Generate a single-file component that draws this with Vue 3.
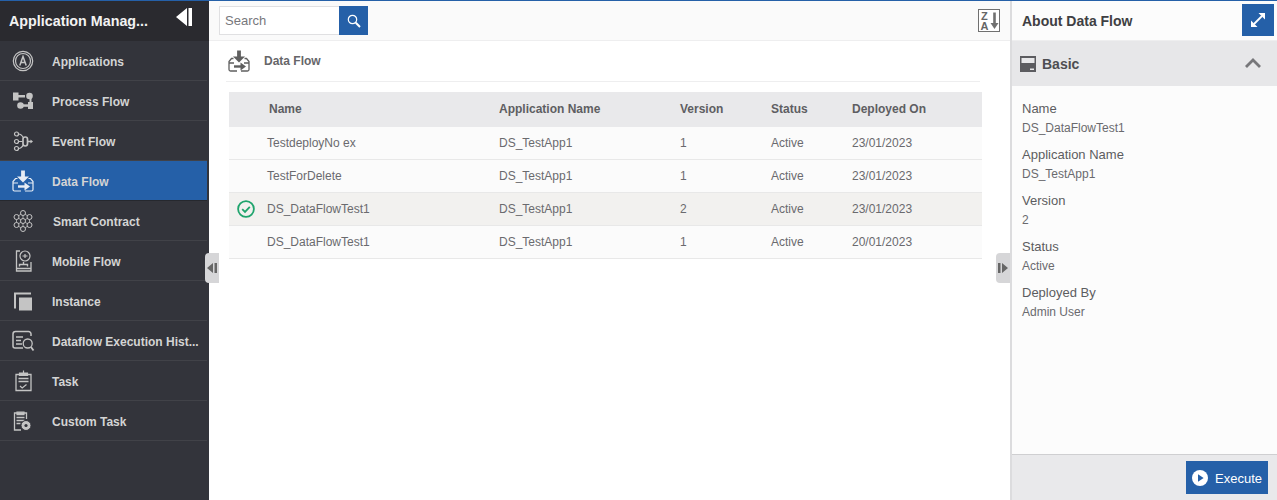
<template>
  <div class="app">
    <aside class="sidebar">
      <div class="side-head">
        <span class="side-title">Application Manag...</span>
        <svg class="collapse" width="16" height="18" viewBox="0 0 16 18"><path d="M11 0v18L0 9z M12.500 0H16V18H12.500z" fill="#fff"/></svg>
      </div>
      <div v-for="item in menu" :key="item.name" class="menu-item" :class="{ active: item.active }">
        <span class="menu-icon">
          <svg width="26" height="26" viewBox="0 0 26 26" fill="none" stroke="#c4c4c4" stroke-width="1.200" v-html="item.icon"></svg>
        </span>
        <span class="menu-label" :style="{ marginLeft: item.shift + 'px' }">{{ item.name }}</span>
      </div>
    </aside>

    <main class="main">
      <div class="toolbar">
        <div class="search">
          <input class="search-input" placeholder="Search" />
          <button class="search-btn">
            <svg width="14" height="14" viewBox="0 0 14 14" fill="none" stroke="#fff"><circle cx="5.500" cy="5.500" r="4.200" stroke-width="1.200"/><path d="M8.800 8.800L13 13" stroke-width="2"/></svg>
          </button>
        </div>
        <svg class="sort" width="22" height="23" viewBox="0 0 22 23">
          <rect x="0.500" y="0.500" width="21" height="22" fill="#fff" stroke="#707070"/>
          <text x="3" y="10.500" class="sort-text">Z</text>
          <text x="2.500" y="20.500" class="sort-text">A</text>
          <path d="M16.500 3.500v13" stroke="#707070" stroke-width="2.600"/><path d="M12.500 14h8l-4 6z" fill="#707070"/>
        </svg>
      </div>
      <div class="content">
        <div class="crumb">
          <svg width="26" height="26" viewBox="0 0 26 26" fill="none" stroke="#5f5f5f" stroke-width="1.300" v-html="dataFlowIcon('#5f5f5f')"></svg>
          <span class="crumb-label">Data Flow</span>
        </div>
        <table class="grid">
          <thead>
            <tr>
              <th class="c-name">Name</th>
              <th class="c-app">Application Name</th>
              <th class="c-ver">Version</th>
              <th class="c-stat">Status</th>
              <th>Deployed On</th>
            </tr>
          </thead>
          <tbody>
            <tr v-for="row in rows" :key="row.name + row.version" :class="{ selected: row.selected }">
              <td class="c-name">
                <svg v-if="row.selected" class="tick" width="18" height="18" viewBox="0 0 18 18" fill="none" stroke="#1fa46d"><circle cx="9" cy="9" r="7.900" stroke-width="1.800"/><path d="M5.200 9.200l2.800 2.700 4.800-5" stroke-width="1.800"/></svg>
                {{ row.name }}
              </td>
              <td>{{ row.app }}</td>
              <td>{{ row.version }}</td>
              <td>{{ row.status }}</td>
              <td>{{ row.date }}</td>
            </tr>
          </tbody>
        </table>
      </div>
      <div class="handle handle-left">
        <svg width="10" height="10" viewBox="0 0 10 10"><path d="M6 0v10L0 5z M7.500 0H10V10H7.500z" fill="#666"/></svg>
      </div>
      <div class="handle handle-right">
        <svg width="10" height="10" viewBox="0 0 10 10"><path d="M0 0H2.500V10H0z M4 0l6 5-6 5z" fill="#666"/></svg>
      </div>
    </main>

    <aside class="detail">
      <div class="detail-head">
        <span class="detail-title">About Data Flow</span>
        <button class="expand">
          <svg width="14" height="14" viewBox="0 0 14 14"><path d="M7.500 0H14V6.500zM0 7.500V14H6.500z" fill="#fff"/><path d="M3 11L11 3" stroke="#fff" stroke-width="1.800"/></svg>
        </button>
      </div>
      <div class="section-head">
        <svg width="16" height="16" viewBox="0 0 16 16"><rect width="16" height="16" fill="#5c5c60"/><rect x="1.500" y="2" width="13" height="5" fill="#e8e8ea"/><rect x="10" y="12.500" width="4" height="1.500" fill="#e8e8ea"/></svg>
        <span class="section-title">Basic</span>
        <svg class="chev" width="16" height="10" viewBox="0 0 16 10" fill="none" stroke="#77777a" stroke-width="2.800"><path d="M1 9l7-7 7 7"/></svg>
      </div>
      <div class="fields">
        <div v-for="f in fields" :key="f.label" class="field">
          <div class="field-label">{{ f.label }}</div>
          <div class="field-value">{{ f.value }}</div>
        </div>
      </div>
      <div class="detail-foot">
        <button class="execute">
          <svg width="16" height="16" viewBox="0 0 16 16"><circle cx="8" cy="8" r="8" fill="#fff"/><path d="M6 4.200v7.600l5.600-3.800z" fill="#2560a8"/></svg>
          <span class="execute-label">Execute</span>
        </button>
      </div>
    </aside>
  </div>
</template>

<script setup>
// buckets and the two arrows, shared by the menu entry and the page heading
function dataFlowIcon(color) {
  return `<path d="M13 2.500v7" stroke="${color}" stroke-width="3.800"/>
    <path d="M7 8.500h12L13 14.500z" fill="${color}" stroke="none"/>
    <path d="M7.500 10.500H5.500L3 13.500V21.500a1.500 1.500 0 0 0 1.500 1.500H11M18.500 10.500h2L23 13.500V21.500a1.500 1.500 0 0 1-1.500 1.500H15M3 15h5M18 15h5"/>
    <path d="M8 18.500h7.500" stroke="${color}" stroke-width="2.400"/>
    <path d="M14.500 14.500l5.500 4-5.500 4z" fill="${color}" stroke="none"/>`
}

const menu = [
  { name: 'Applications', shift: 0, icon: '<circle cx="13" cy="13" r="9.700"/><circle cx="13" cy="13" r="7.500"/><path d="M9.800 17.500l3.200-9 3.200 9M11 14.500h4" stroke-width="1.500"/>' },
  { name: 'Process Flow', shift: 0, icon: '<g fill="#c4c4c4" stroke="none"><rect x="3" y="4.500" width="5.500" height="8"/><rect x="8" y="7" width="7" height="2.500"/><circle cx="19.500" cy="8" r="3.300"/><circle cx="10.500" cy="17.500" r="3.300"/><rect x="18" y="14" width="5" height="7"/><rect x="13" y="16.300" width="6" height="2.500"/><rect x="19.500" y="10" width="2" height="5"/></g>' },
  { name: 'Event Flow', shift: 0, icon: '<circle cx="6.500" cy="6" r="2"/><circle cx="6.500" cy="13.500" r="2"/><circle cx="6.500" cy="20.500" r="2"/><path d="M8.500 6c2 0 4 2 5 4M8.500 13.500h4M8.500 20.500c2 0 4-2 5-4"/><rect x="13" y="9" width="4.500" height="9" rx="2.200" stroke-width="1.700"/><path d="M18 13.500h3" stroke-width="1.500"/><path d="M20.500 11.500l2.500 2-2.500 2z" fill="#c4c4c4" stroke="none"/>' },
  { name: 'Data Flow', shift: 0, active: true, icon: '<g stroke="#e8edf5">' + dataFlowIcon('#e8edf5') + '</g>' },
  { name: 'Smart Contract', shift: 1, icon: '<g stroke-width="1"><path d="M13 5v16M6.500 9l13 8M19.500 9l-13 8M13 5l6.500 4v8L13 21l-6.500-4V9z" stroke-width="0.800"/><circle cx="13" cy="5" r="2.500" fill="#33343b"/><circle cx="6.500" cy="9" r="2.500" fill="#33343b"/><circle cx="19.500" cy="9" r="2.500" fill="#33343b"/><circle cx="13" cy="13" r="2.500" fill="#33343b"/><circle cx="6.500" cy="17" r="2.500" fill="#33343b"/><circle cx="19.500" cy="17" r="2.500" fill="#33343b"/><circle cx="13" cy="21" r="2.500" fill="#33343b"/></g>' },
  { name: 'Mobile Flow', shift: 0, icon: '<path d="M10 3H6.500v20H21V14M6.500 20.500H21" stroke-width="1.300"/><circle cx="15" cy="8" r="5"/><path d="M12.500 8h5M15 6v4"/><path d="M9.500 18.500v-2h8v2M13.500 14v3" stroke-width="1.400"/>' },
  { name: 'Instance', shift: 0, icon: '<path d="M4 20.500V4.500h17v2H6v14z" fill="#c4c4c4" stroke="none"/><rect x="9" y="9.500" width="13" height="13" fill="#c4c4c4" stroke="none"/>' },
  { name: 'Dataflow Execution Hist...', shift: 0, icon: '<path d="M21 8V6a2.500 2.500 0 0 0-2.500-2.500H5.500A2.500 2.500 0 0 0 3 6v12a2 2 0 0 0 2 2h8" stroke-width="1.500"/><path d="M6 9h7M6 12.500h5M6 16h6" stroke-width="1.300"/><circle cx="17.700" cy="15.500" r="4.500" stroke-width="1.300"/><path d="M21 19l2.500 3.500" stroke-width="1.800"/>' },
  { name: 'Task', shift: 0, icon: '<path d="M9.500 6.500H6v16h15v-16h-3.500" stroke-width="1.300"/><path d="M9.500 5h8v2.500h-8zM13.500 2.500V5" fill="#c4c4c4"/><path d="M8.500 10.500h10M8.500 13.500h10" stroke-width="1.300"/><path d="M10 18l2.200 2 4.300-3.500"/>' },
  { name: 'Custom Task', shift: 0, icon: '<path d="M7 5H4.500v17H11M14 5h2.500v6" stroke-width="1.300"/><path d="M7 4.200h7v2.500H7z" fill="#c4c4c4"/><path d="M6.500 9.500h8M6.500 12.500h8M6.500 15.500h4" stroke-width="1.300"/><circle cx="16" cy="17.500" r="5" fill="#c4c4c4" stroke="#33343b" stroke-width="1"/><circle cx="16" cy="17.500" r="1.600" fill="#33343b" stroke="none"/>' }
]

const rows = [
  { name: 'TestdeployNo ex', app: 'DS_TestApp1', version: 1, status: 'Active', date: '23/01/2023' },
  { name: 'TestForDelete', app: 'DS_TestApp1', version: 1, status: 'Active', date: '23/01/2023' },
  { name: 'DS_DataFlowTest1', app: 'DS_TestApp1', version: 2, status: 'Active', date: '23/01/2023', selected: true },
  { name: 'DS_DataFlowTest1', app: 'DS_TestApp1', version: 1, status: 'Active', date: '20/01/2023' }
]

const fields = [
  { label: 'Name', value: 'DS_DataFlowTest1' },
  { label: 'Application Name', value: 'DS_TestApp1' },
  { label: 'Version', value: '2' },
  { label: 'Status', value: 'Active' },
  { label: 'Deployed By', value: 'Admin User' }
]
</script>

<style scoped>
.app {
  display: flex;
  width: 1277px;
  height: 500px;
  box-sizing: border-box;
  border-top: 1px solid #2560a8;
  overflow: hidden;
  font-family: "Liberation Sans", Arial, sans-serif;
  color: #58585c;
  background: #fff;
}

.sidebar {
  width: 209px;
  flex: none;
  background: #33343b;
}

.side-head {
  height: 40px;
  background: #2a2a2f;
  display: flex;
  align-items: center;
  justify-content: space-between;
  padding: 0 17px 0 9px;
}

.side-title {
  color: #f2f2f2;
  font-size: 14.300px;
  font-weight: 700;
}

.collapse {
  margin-top: -8px;
}

.menu-item {
  height: 40px;
  box-sizing: border-box;
  width: 207px;
  border-bottom: 1px solid #414248;
  display: flex;
  align-items: center;
}

.menu-item.active {
  background: #2560a8;
  border-bottom-color: #26282e;
}

.menu-icon {
  width: 52px;
  flex: none;
  display: flex;
  padding-left: 10px;
  box-sizing: border-box;
}

.menu-label {
  color: #d4d4d4;
  font-size: 12px;
  font-weight: 700;
  white-space: nowrap;
  padding-top: 2px;
}

.main {
  flex: 1;
  min-width: 0;
  position: relative;
}

.toolbar {
  height: 40px;
  box-sizing: border-box;
  background: #fafafa;
  border-bottom: 1px solid #eeeeef;
  display: flex;
  align-items: center;
  justify-content: space-between;
  padding: 0 10px 0 10px;
}

.search {
  display: flex;
  height: 29px;
}

.search-input {
  width: 120px;
  box-sizing: border-box;
  border: 1px solid #e0e0e2;
  border-right: none;
  padding: 0 5px;
  font: 13px "Liberation Sans", sans-serif;
  background: #fff;
  outline: none;
}

.search-input::placeholder {
  color: #77777c;
  opacity: 1;
}

.search-btn {
  width: 29px;
  border: none;
  padding: 0;
  background: #2560a8;
  display: flex;
  align-items: center;
  justify-content: center;
}

.sort-text {
  font: 700 11px "Liberation Sans", sans-serif;
  fill: #666;
}

.content {
  padding: 0 28px 0 20px;
}

.crumb {
  height: 41px;
  box-sizing: border-box;
  border-bottom: 1px solid #eeeeef;
  margin-right: 2px;
  display: flex;
  align-items: center;
  gap: 12px;
  margin-left: -3px;
  font-size: 12px;
  font-weight: 700;
}

.crumb-label {
  color: #666669;
}

.grid {
  margin-top: 10px;
  width: 753px;
  border-collapse: collapse;
  table-layout: fixed;
  font-size: 12px;
}

.grid th {
  height: 35px;
  box-sizing: border-box;
  padding: 0 0 2px;
  background: #e9e9eb;
  text-align: left;
  font-weight: 700;
  color: #5e5e62;
}

.grid td {
  height: 33px;
  box-sizing: border-box;
  padding: 0;
  background: #fbfbfb;
  border-bottom: 1px solid #e8e8e8;
  color: #6a6a6e;
}

.grid tbody tr:first-child td {
  height: 32px;
}

.grid tr.selected td {
  background: #f2f1ef;
}

.grid .c-name {
  width: 270px;
  padding-left: 38px;
  box-sizing: border-box;
  position: relative;
}

.grid th.c-name {
  padding-left: 40px;
}

.c-app {
  width: 181px;
}

.c-ver {
  width: 91px;
}

.c-stat {
  width: 81px;
}

.tick {
  position: absolute;
  left: 8px;
  top: 7px;
}

.handle {
  position: absolute;
  top: 252px;
  width: 14px;
  height: 30px;
  background: #d6d6d8;
  display: flex;
  align-items: center;
  justify-content: center;
}

.handle-left {
  left: -4px;
  border-radius: 4px 0 0 4px;
}

.handle-right {
  right: 0;
  border-radius: 4px 0 0 4px;
}

.detail {
  width: 267px;
  flex: none;
  box-sizing: border-box;
  border-left: 2px solid #dcdcde;
  background: #fcfcfc;
  display: flex;
  flex-direction: column;
}

.detail-head {
  height: 40px;
  box-sizing: border-box;
  display: flex;
  align-items: flex-start;
  justify-content: space-between;
  border-bottom: 1px solid #eeeeef;
  padding: 3px 3px 0 10px;
}

.detail-title {
  font-size: 14px;
  font-weight: 700;
  color: #3f3f43;
  line-height: 34px;
}

.expand {
  width: 32px;
  height: 32px;
  border: none;
  padding: 0;
  background: #2560a8;
  display: flex;
  align-items: center;
  justify-content: center;
}

.section-head {
  height: 45px;
  background: #e7e7e9;
  display: flex;
  align-items: center;
  padding: 0 16px 0 8px;
  gap: 6px;
}

.section-title {
  flex: 1;
  font-size: 14px;
  font-weight: 700;
  color: #4e4e52;
}

.chev {
  margin-top: -2px;
}

.fields {
  flex: 1;
  padding: 14px 10px 0;
}

.field {
  margin-bottom: 9px;
}

.field-label {
  font-size: 13px;
  line-height: 18px;
  color: #5c5c60;
}

.field-value {
  font-size: 12px;
  line-height: 18px;
  padding-top: 1px;
  color: #6a6a6e;
}

.detail-foot {
  height: 46px;
  box-sizing: border-box;
  background: #e9e9eb;
  border-top: 1px solid #cfcfd1;
  display: flex;
  align-items: center;
  justify-content: flex-end;
  padding-right: 9px;
}

.execute {
  width: 82px;
  height: 33px;
  border: none;
  padding: 0 0 0 6px;
  background: #2560a8;
  color: #fff;
  display: flex;
  align-items: center;
  gap: 7px;
  font: 13px "Liberation Sans", sans-serif;
}

.execute-label {
  padding-top: 2px;
}
</style>

<style>
body {
  margin: 0;
}
</style>
